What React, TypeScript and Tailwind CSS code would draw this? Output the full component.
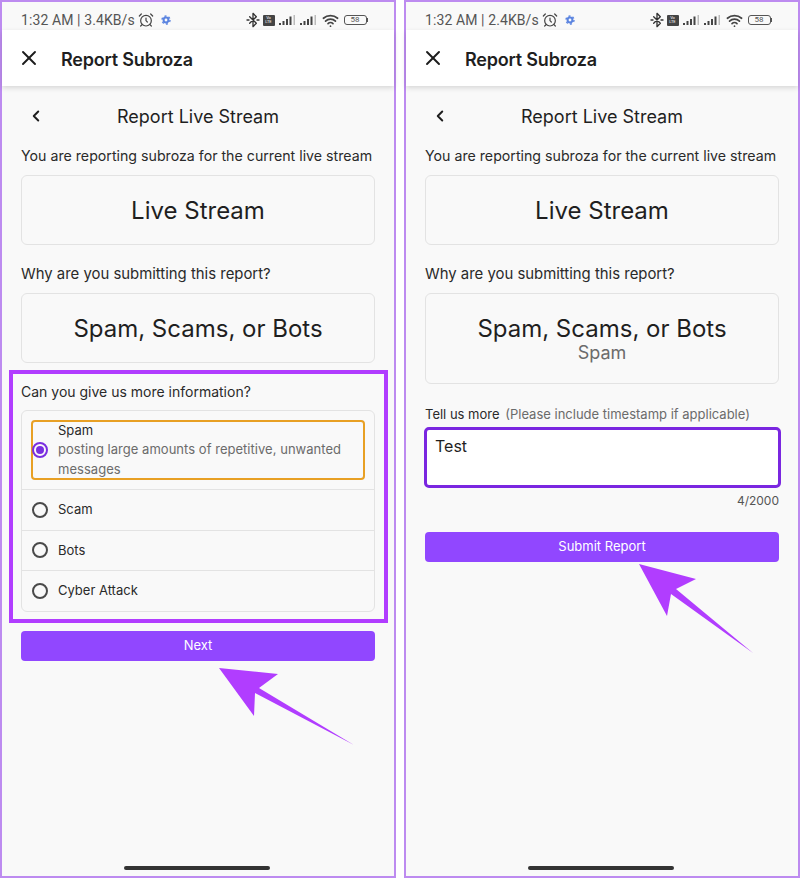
import { AlarmClock, BluetoothConnected, ChevronLeft, Wifi, X } from "lucide-react";

const font = "font-['Inter','Liberation_Sans',sans-serif]";

function Signal() {
    return (
        <svg width="17" height="12" viewBox="0 0 17 12" fill="#444">
            <rect x="0" y="9" width="2" height="2" />
            <rect x="3.5" y="7" width="2" height="4" />
            <rect x="7" y="5" width="2" height="6" />
            <rect x="10.5" y="2.5" width="2" height="8.5" />
            <rect x="14.5" y="1" width="1.5" height="10" fill="#bbb" />
        </svg>
    );
}

function Gear() {
    return (
        <svg className="ml-[7px]" width="10" height="10" viewBox="0 0 10 10" fill="none" stroke="#5b84e0">
            <circle cx="5" cy="5" r="2.4" strokeWidth="2" />
            <circle cx="5" cy="5" r="4" strokeWidth="1.4" strokeDasharray="2 2.2" />
        </svg>
    );
}

function StatusBar({ speed }: { speed: string }) {
    return (
        <div className="flex h-[28px] items-center justify-between pl-[19px] pr-[26px] pt-[8px] font-['Roboto',sans-serif] text-[#555]">
            <div className="flex items-center">
                <span className="text-[14px] tracking-[0.1px]">1:32 AM | {speed}</span>
                <AlarmClock className="ml-[3px] h-[16px] w-[16px]" strokeWidth={1.8} color="#444" />
                <Gear />
            </div>
            <div className="flex items-center">
                <BluetoothConnected className="-ml-[1px] h-[16px] w-[16px]" strokeWidth={2} color="#333" />
                <span className="ml-[2px] flex h-[11px] w-[12px] items-center justify-center rounded-[1px] bg-[#444] text-center text-[4px] leading-[4px] text-white">
                    Vo
                    <br />
                    LTE
                </span>
                <span className="ml-[4px]"><Signal /></span>
                <span className="ml-[4px]"><Signal /></span>
                <Wifi className="ml-[5px] h-[17px] w-[17px]" strokeWidth={2.4} color="#444" />
                <span className="ml-[5px] flex h-[10px] w-[23px] items-center justify-center rounded-[3px] border border-[#555] text-[8px] leading-none">
                    58
                </span>
                <span className="h-[4px] w-[1.5px] bg-[#555]" />
            </div>
        </div>
    );
}

function Header() {
    return (
        <div className="flex h-[56px] items-center bg-white pl-[15px] shadow-[0_2px_5px_rgba(0,0,0,0.14)]">
            <X className="-mt-[1px] h-[24px] w-[24px] text-[#1c1c1c]" strokeWidth={1.9} />
            <span className={`${font} ml-[20px] mt-[2px] text-[18px] font-semibold tracking-[-0.2px] text-[#1f1f1f]`}>Report Subroza</span>
        </div>
    );
}

function TitleRow() {
    return (
        <div className="relative mt-[18px] flex h-[24px] items-center justify-center">
            <ChevronLeft className="absolute left-[6px] top-[3px] h-[18px] w-[18px] text-[#1f1f1f]" strokeWidth={2.6} />
            <span className="text-[18px] text-[#1f1f1f]">Report Live Stream</span>
        </div>
    );
}

function SummaryCard({ title, sub }: { title: string; sub?: string }) {
    return (
        <div className="flex flex-col items-center justify-center rounded-md border border-[#e3e3e3] pb-[16px] pt-[18px] text-[#1f1f1f]">
            <span className="text-[24px] leading-[34px]">{title}</span>
            {sub && <span className="-mt-[4px] mb-[3px] text-[18px] leading-[22px] text-[#6b6b6b]">{sub}</span>}
        </div>
    );
}

function Radio({ checked }: { checked?: boolean }) {
    return (
        <span className={`flex h-[16px] w-[16px] shrink-0 items-center justify-center rounded-full border-2 ${checked ? "border-[#7a2ee0]" : "border-[#4a4a4a]"}`}>
            {checked && <span className="h-[8px] w-[8px] rounded-full bg-[#7a2ee0]" />}
        </span>
    );
}

function Option({ label }: { label: string }) {
    return (
        <div className="flex h-[40.5px] items-center gap-[10px] border-t border-[#e3e3e3] px-[10px] text-[13px] text-[#2a2a2a]">
            <Radio />
            <span>{label}</span>
        </div>
    );
}

function Arrow({ points }: { points: string }) {
    return (
        <svg className="pointer-events-none absolute left-0 top-0" width="396" height="878" fill="#b13dff">
            <polygon points={points} />
        </svg>
    );
}

function HomeBar() {
    return (
        <div className="absolute bottom-[6px] left-[122px] h-[4px] w-[146px] rounded-full bg-[#333]" />
    );
}

function Phone({ children, speed, arrow }: { children: React.ReactNode; speed: string; arrow: string }) {
    return (
        <div className="relative h-[878px] w-[396px] border-2 border-[#bd8bf0] bg-[#f9f9f9]">
            <StatusBar speed={speed} />
            <Header />
            <div className={`${font} px-[19px]`}>{children}</div>
            <HomeBar />
            <Arrow points={arrow} />
        </div>
    );
}

export default function App() {
    return (
        <div className="flex h-[878px] w-[800px] justify-between bg-white">
            <Phone speed="3.4KB/s" arrow="217,666 276,672 257,686 352,743 253,691 252,714">
                <TitleRow />
                <p className="mt-[18px] whitespace-nowrap text-[14.2px] leading-[20px] text-[#2a2a2a]">You are reporting subroza for the current live stream</p>
                <div className="mt-[9px]"><SummaryCard title="Live Stream" /></div>
                <p className="mt-[19px] text-[14.9px] leading-[20px] text-[#2a2a2a]">Why are you submitting this report?</p>
                <div className="mt-[9px]"><SummaryCard title="Spam, Scams, or Bots" /></div>
                <div className="-ml-[12px] -mr-[13px] mt-[7px] border-4 border-[#b13dff] pb-[7px] pl-[8px] pr-[9px] pt-[8px]">
                    <p className="text-[14px] leading-[20px] text-[#2a2a2a]">Can you give us more information?</p>
                    <div className="mt-[8px] rounded-md border border-[#e3e3e3]">
                        <div className="h-[78px] px-[9px] pt-[9px]">
                            <div className="flex h-[60px] items-center gap-[10px] rounded-[4px] border-2 border-[#e8a024] pr-[8px]">
                                <span className="-ml-[1px]"><Radio checked /></span>
                                <div className="text-[13px] leading-[19.5px]">
                                    <div className="text-[#2a2a2a]">Spam</div>
                                    <div className="tracking-[0.03px] text-[#6b6b6b]">posting large amounts of repetitive, unwanted messages</div>
                                </div>
                            </div>
                        </div>
                        <Option label="Scam" />
                        <Option label="Bots" />
                        <Option label="Cyber Attack" />
                    </div>
                </div>
                <button className="mt-[8px] h-[30px] w-full rounded-[4px] bg-[#9147ff] text-[13px] text-white">Next</button>
            </Phone>
            <Phone speed="2.4KB/s" arrow="233,562 290,577 270,587 347,651 265,592 261,614">
                <TitleRow />
                <p className="mt-[18px] whitespace-nowrap text-[14.2px] leading-[20px] text-[#2a2a2a]">You are reporting subroza for the current live stream</p>
                <div className="mt-[9px]"><SummaryCard title="Live Stream" /></div>
                <p className="mt-[19px] text-[14.9px] leading-[20px] text-[#2a2a2a]">Why are you submitting this report?</p>
                <div className="mt-[9px]"><SummaryCard title="Spam, Scams, or Bots" sub="Spam" /></div>
                <p className="mt-[20px] text-[13px] leading-[20px] text-[#2a2a2a]">
                    Tell us more <span className="ml-[2px] text-[#6b6b6b]">(Please include timestamp if applicable)</span>
                </p>
                <div className="-ml-[1px] -mr-[2px] mt-[3px] h-[61px] rounded-[5px] border-[3px] border-[#7a26e0] bg-white pl-[8px] pt-[4px] text-[16px] text-[#1f1f1f]">Test</div>
                <p className="mt-[4px] text-right text-[12px] leading-[18px] text-[#555]">4/2000</p>
                <button className="mt-[22px] h-[30px] w-full rounded-[4px] bg-[#9147ff] text-[13px] text-white">Submit Report</button>
            </Phone>
        </div>
    );
}
